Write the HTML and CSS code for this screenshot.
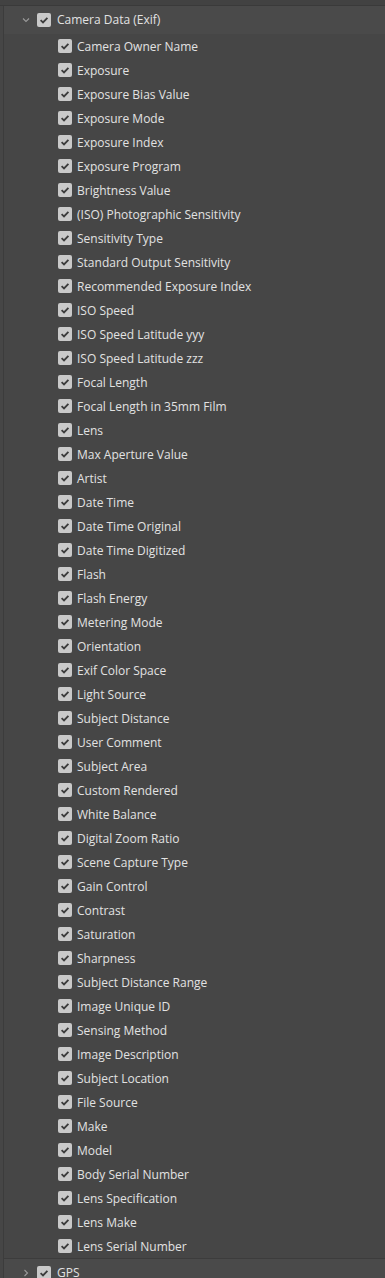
FILE: index.html
```html
<!DOCTYPE html>
<html>
<head>
<meta charset="utf-8">
<link rel="stylesheet" href="styles.css">
</head>
<body>
<div class="panel">
  <div class="topstrip"></div>
  <div class="tree">
    <div class="group-row">
      <svg class="chev" width="10" height="10" viewBox="0 0 10 10"><path d="M2 3.5 L5 6.5 L8 3.5" fill="none" stroke="#9a9a9a" stroke-width="1.1"/></svg>
      <span class="cb"><svg width="14" height="14" viewBox="0 0 14 14"><path d="M3.6 7.2 L6 9.4 L10.4 4.8" fill="none" stroke="#3b3b3b" stroke-width="1.8"/></svg></span>
      <span class="label">Camera Data (Exif)</span>
    </div>
    <div class="items">
      <div class="item"><span class="cb"><svg width="14" height="14" viewBox="0 0 14 14"><path d="M3.6 7.2 L6 9.4 L10.4 4.8" fill="none" stroke="#3b3b3b" stroke-width="1.8"/></svg></span><span class="label">Camera Owner Name</span></div>
      <div class="item"><span class="cb"><svg width="14" height="14" viewBox="0 0 14 14"><path d="M3.6 7.2 L6 9.4 L10.4 4.8" fill="none" stroke="#3b3b3b" stroke-width="1.8"/></svg></span><span class="label">Exposure</span></div>
      <div class="item"><span class="cb"><svg width="14" height="14" viewBox="0 0 14 14"><path d="M3.6 7.2 L6 9.4 L10.4 4.8" fill="none" stroke="#3b3b3b" stroke-width="1.8"/></svg></span><span class="label">Exposure Bias Value</span></div>
      <div class="item"><span class="cb"><svg width="14" height="14" viewBox="0 0 14 14"><path d="M3.6 7.2 L6 9.4 L10.4 4.8" fill="none" stroke="#3b3b3b" stroke-width="1.8"/></svg></span><span class="label">Exposure Mode</span></div>
      <div class="item"><span class="cb"><svg width="14" height="14" viewBox="0 0 14 14"><path d="M3.6 7.2 L6 9.4 L10.4 4.8" fill="none" stroke="#3b3b3b" stroke-width="1.8"/></svg></span><span class="label">Exposure Index</span></div>
      <div class="item"><span class="cb"><svg width="14" height="14" viewBox="0 0 14 14"><path d="M3.6 7.2 L6 9.4 L10.4 4.8" fill="none" stroke="#3b3b3b" stroke-width="1.8"/></svg></span><span class="label">Exposure Program</span></div>
      <div class="item"><span class="cb"><svg width="14" height="14" viewBox="0 0 14 14"><path d="M3.6 7.2 L6 9.4 L10.4 4.8" fill="none" stroke="#3b3b3b" stroke-width="1.8"/></svg></span><span class="label">Brightness Value</span></div>
      <div class="item"><span class="cb"><svg width="14" height="14" viewBox="0 0 14 14"><path d="M3.6 7.2 L6 9.4 L10.4 4.8" fill="none" stroke="#3b3b3b" stroke-width="1.8"/></svg></span><span class="label">(ISO) Photographic Sensitivity</span></div>
      <div class="item"><span class="cb"><svg width="14" height="14" viewBox="0 0 14 14"><path d="M3.6 7.2 L6 9.4 L10.4 4.8" fill="none" stroke="#3b3b3b" stroke-width="1.8"/></svg></span><span class="label">Sensitivity Type</span></div>
      <div class="item"><span class="cb"><svg width="14" height="14" viewBox="0 0 14 14"><path d="M3.6 7.2 L6 9.4 L10.4 4.8" fill="none" stroke="#3b3b3b" stroke-width="1.8"/></svg></span><span class="label">Standard Output Sensitivity</span></div>
      <div class="item"><span class="cb"><svg width="14" height="14" viewBox="0 0 14 14"><path d="M3.6 7.2 L6 9.4 L10.4 4.8" fill="none" stroke="#3b3b3b" stroke-width="1.8"/></svg></span><span class="label">Recommended Exposure Index</span></div>
      <div class="item"><span class="cb"><svg width="14" height="14" viewBox="0 0 14 14"><path d="M3.6 7.2 L6 9.4 L10.4 4.8" fill="none" stroke="#3b3b3b" stroke-width="1.8"/></svg></span><span class="label">ISO Speed</span></div>
      <div class="item"><span class="cb"><svg width="14" height="14" viewBox="0 0 14 14"><path d="M3.6 7.2 L6 9.4 L10.4 4.8" fill="none" stroke="#3b3b3b" stroke-width="1.8"/></svg></span><span class="label">ISO Speed Latitude yyy</span></div>
      <div class="item"><span class="cb"><svg width="14" height="14" viewBox="0 0 14 14"><path d="M3.6 7.2 L6 9.4 L10.4 4.8" fill="none" stroke="#3b3b3b" stroke-width="1.8"/></svg></span><span class="label">ISO Speed Latitude zzz</span></div>
      <div class="item"><span class="cb"><svg width="14" height="14" viewBox="0 0 14 14"><path d="M3.6 7.2 L6 9.4 L10.4 4.8" fill="none" stroke="#3b3b3b" stroke-width="1.8"/></svg></span><span class="label">Focal Length</span></div>
      <div class="item"><span class="cb"><svg width="14" height="14" viewBox="0 0 14 14"><path d="M3.6 7.2 L6 9.4 L10.4 4.8" fill="none" stroke="#3b3b3b" stroke-width="1.8"/></svg></span><span class="label">Focal Length in 35mm Film</span></div>
      <div class="item"><span class="cb"><svg width="14" height="14" viewBox="0 0 14 14"><path d="M3.6 7.2 L6 9.4 L10.4 4.8" fill="none" stroke="#3b3b3b" stroke-width="1.8"/></svg></span><span class="label">Lens</span></div>
      <div class="item"><span class="cb"><svg width="14" height="14" viewBox="0 0 14 14"><path d="M3.6 7.2 L6 9.4 L10.4 4.8" fill="none" stroke="#3b3b3b" stroke-width="1.8"/></svg></span><span class="label">Max Aperture Value</span></div>
      <div class="item"><span class="cb"><svg width="14" height="14" viewBox="0 0 14 14"><path d="M3.6 7.2 L6 9.4 L10.4 4.8" fill="none" stroke="#3b3b3b" stroke-width="1.8"/></svg></span><span class="label">Artist</span></div>
      <div class="item"><span class="cb"><svg width="14" height="14" viewBox="0 0 14 14"><path d="M3.6 7.2 L6 9.4 L10.4 4.8" fill="none" stroke="#3b3b3b" stroke-width="1.8"/></svg></span><span class="label">Date Time</span></div>
      <div class="item"><span class="cb"><svg width="14" height="14" viewBox="0 0 14 14"><path d="M3.6 7.2 L6 9.4 L10.4 4.8" fill="none" stroke="#3b3b3b" stroke-width="1.8"/></svg></span><span class="label">Date Time Original</span></div>
      <div class="item"><span class="cb"><svg width="14" height="14" viewBox="0 0 14 14"><path d="M3.6 7.2 L6 9.4 L10.4 4.8" fill="none" stroke="#3b3b3b" stroke-width="1.8"/></svg></span><span class="label">Date Time Digitized</span></div>
      <div class="item"><span class="cb"><svg width="14" height="14" viewBox="0 0 14 14"><path d="M3.6 7.2 L6 9.4 L10.4 4.8" fill="none" stroke="#3b3b3b" stroke-width="1.8"/></svg></span><span class="label">Flash</span></div>
      <div class="item"><span class="cb"><svg width="14" height="14" viewBox="0 0 14 14"><path d="M3.6 7.2 L6 9.4 L10.4 4.8" fill="none" stroke="#3b3b3b" stroke-width="1.8"/></svg></span><span class="label">Flash Energy</span></div>
      <div class="item"><span class="cb"><svg width="14" height="14" viewBox="0 0 14 14"><path d="M3.6 7.2 L6 9.4 L10.4 4.8" fill="none" stroke="#3b3b3b" stroke-width="1.8"/></svg></span><span class="label">Metering Mode</span></div>
      <div class="item"><span class="cb"><svg width="14" height="14" viewBox="0 0 14 14"><path d="M3.6 7.2 L6 9.4 L10.4 4.8" fill="none" stroke="#3b3b3b" stroke-width="1.8"/></svg></span><span class="label">Orientation</span></div>
      <div class="item"><span class="cb"><svg width="14" height="14" viewBox="0 0 14 14"><path d="M3.6 7.2 L6 9.4 L10.4 4.8" fill="none" stroke="#3b3b3b" stroke-width="1.8"/></svg></span><span class="label">Exif Color Space</span></div>
      <div class="item"><span class="cb"><svg width="14" height="14" viewBox="0 0 14 14"><path d="M3.6 7.2 L6 9.4 L10.4 4.8" fill="none" stroke="#3b3b3b" stroke-width="1.8"/></svg></span><span class="label">Light Source</span></div>
      <div class="item"><span class="cb"><svg width="14" height="14" viewBox="0 0 14 14"><path d="M3.6 7.2 L6 9.4 L10.4 4.8" fill="none" stroke="#3b3b3b" stroke-width="1.8"/></svg></span><span class="label">Subject Distance</span></div>
      <div class="item"><span class="cb"><svg width="14" height="14" viewBox="0 0 14 14"><path d="M3.6 7.2 L6 9.4 L10.4 4.8" fill="none" stroke="#3b3b3b" stroke-width="1.8"/></svg></span><span class="label">User Comment</span></div>
      <div class="item"><span class="cb"><svg width="14" height="14" viewBox="0 0 14 14"><path d="M3.6 7.2 L6 9.4 L10.4 4.8" fill="none" stroke="#3b3b3b" stroke-width="1.8"/></svg></span><span class="label">Subject Area</span></div>
      <div class="item"><span class="cb"><svg width="14" height="14" viewBox="0 0 14 14"><path d="M3.6 7.2 L6 9.4 L10.4 4.8" fill="none" stroke="#3b3b3b" stroke-width="1.8"/></svg></span><span class="label">Custom Rendered</span></div>
      <div class="item"><span class="cb"><svg width="14" height="14" viewBox="0 0 14 14"><path d="M3.6 7.2 L6 9.4 L10.4 4.8" fill="none" stroke="#3b3b3b" stroke-width="1.8"/></svg></span><span class="label">White Balance</span></div>
      <div class="item"><span class="cb"><svg width="14" height="14" viewBox="0 0 14 14"><path d="M3.6 7.2 L6 9.4 L10.4 4.8" fill="none" stroke="#3b3b3b" stroke-width="1.8"/></svg></span><span class="label">Digital Zoom Ratio</span></div>
      <div class="item"><span class="cb"><svg width="14" height="14" viewBox="0 0 14 14"><path d="M3.6 7.2 L6 9.4 L10.4 4.8" fill="none" stroke="#3b3b3b" stroke-width="1.8"/></svg></span><span class="label">Scene Capture Type</span></div>
      <div class="item"><span class="cb"><svg width="14" height="14" viewBox="0 0 14 14"><path d="M3.6 7.2 L6 9.4 L10.4 4.8" fill="none" stroke="#3b3b3b" stroke-width="1.8"/></svg></span><span class="label">Gain Control</span></div>
      <div class="item"><span class="cb"><svg width="14" height="14" viewBox="0 0 14 14"><path d="M3.6 7.2 L6 9.4 L10.4 4.8" fill="none" stroke="#3b3b3b" stroke-width="1.8"/></svg></span><span class="label">Contrast</span></div>
      <div class="item"><span class="cb"><svg width="14" height="14" viewBox="0 0 14 14"><path d="M3.6 7.2 L6 9.4 L10.4 4.8" fill="none" stroke="#3b3b3b" stroke-width="1.8"/></svg></span><span class="label">Saturation</span></div>
      <div class="item"><span class="cb"><svg width="14" height="14" viewBox="0 0 14 14"><path d="M3.6 7.2 L6 9.4 L10.4 4.8" fill="none" stroke="#3b3b3b" stroke-width="1.8"/></svg></span><span class="label">Sharpness</span></div>
      <div class="item"><span class="cb"><svg width="14" height="14" viewBox="0 0 14 14"><path d="M3.6 7.2 L6 9.4 L10.4 4.8" fill="none" stroke="#3b3b3b" stroke-width="1.8"/></svg></span><span class="label">Subject Distance Range</span></div>
      <div class="item"><span class="cb"><svg width="14" height="14" viewBox="0 0 14 14"><path d="M3.6 7.2 L6 9.4 L10.4 4.8" fill="none" stroke="#3b3b3b" stroke-width="1.8"/></svg></span><span class="label">Image Unique ID</span></div>
      <div class="item"><span class="cb"><svg width="14" height="14" viewBox="0 0 14 14"><path d="M3.6 7.2 L6 9.4 L10.4 4.8" fill="none" stroke="#3b3b3b" stroke-width="1.8"/></svg></span><span class="label">Sensing Method</span></div>
      <div class="item"><span class="cb"><svg width="14" height="14" viewBox="0 0 14 14"><path d="M3.6 7.2 L6 9.4 L10.4 4.8" fill="none" stroke="#3b3b3b" stroke-width="1.8"/></svg></span><span class="label">Image Description</span></div>
      <div class="item"><span class="cb"><svg width="14" height="14" viewBox="0 0 14 14"><path d="M3.6 7.2 L6 9.4 L10.4 4.8" fill="none" stroke="#3b3b3b" stroke-width="1.8"/></svg></span><span class="label">Subject Location</span></div>
      <div class="item"><span class="cb"><svg width="14" height="14" viewBox="0 0 14 14"><path d="M3.6 7.2 L6 9.4 L10.4 4.8" fill="none" stroke="#3b3b3b" stroke-width="1.8"/></svg></span><span class="label">File Source</span></div>
      <div class="item"><span class="cb"><svg width="14" height="14" viewBox="0 0 14 14"><path d="M3.6 7.2 L6 9.4 L10.4 4.8" fill="none" stroke="#3b3b3b" stroke-width="1.8"/></svg></span><span class="label">Make</span></div>
      <div class="item"><span class="cb"><svg width="14" height="14" viewBox="0 0 14 14"><path d="M3.6 7.2 L6 9.4 L10.4 4.8" fill="none" stroke="#3b3b3b" stroke-width="1.8"/></svg></span><span class="label">Model</span></div>
      <div class="item"><span class="cb"><svg width="14" height="14" viewBox="0 0 14 14"><path d="M3.6 7.2 L6 9.4 L10.4 4.8" fill="none" stroke="#3b3b3b" stroke-width="1.8"/></svg></span><span class="label">Body Serial Number</span></div>
      <div class="item"><span class="cb"><svg width="14" height="14" viewBox="0 0 14 14"><path d="M3.6 7.2 L6 9.4 L10.4 4.8" fill="none" stroke="#3b3b3b" stroke-width="1.8"/></svg></span><span class="label">Lens Specification</span></div>
      <div class="item"><span class="cb"><svg width="14" height="14" viewBox="0 0 14 14"><path d="M3.6 7.2 L6 9.4 L10.4 4.8" fill="none" stroke="#3b3b3b" stroke-width="1.8"/></svg></span><span class="label">Lens Make</span></div>
      <div class="item"><span class="cb"><svg width="14" height="14" viewBox="0 0 14 14"><path d="M3.6 7.2 L6 9.4 L10.4 4.8" fill="none" stroke="#3b3b3b" stroke-width="1.8"/></svg></span><span class="label">Lens Serial Number</span></div>
    </div>
    <div class="group-row last">
      <svg class="chev" width="10" height="10" viewBox="0 0 10 10"><path d="M3.5 2 L6.5 5 L3.5 8" fill="none" stroke="#9a9a9a" stroke-width="1.1"/></svg>
      <span class="cb"><svg width="14" height="14" viewBox="0 0 14 14"><path d="M3.6 7.2 L6 9.4 L10.4 4.8" fill="none" stroke="#3b3b3b" stroke-width="1.8"/></svg></span>
      <span class="label">GPS</span>
    </div>
  </div>
</div>
</body>
</html>
```
FILE: styles.css
```css
html, body {
  margin: 0;
  padding: 0;
  background: #464646;
  height: 1278px;
  overflow: hidden;
}
.panel {
  font-family: "Open Sans", "Noto Sans", sans-serif;
  font-size: 12px;
  color: #e2e2e2;
}
.topstrip {
  height: 5px;
  background: #424242;
  border-bottom: 1px solid #3a3a3a;
}
.tree {
  border-left: 1px solid #3c3c3c;
  margin-left: 3px;
}
.group-row {
  height: 28px;
  display: flex;
  align-items: center;
  background: #4a4a4a;
  padding-left: 17px;
}
.group-row.last {
  border-top: 1px solid #3c3c3c;
  height: 27px;
  align-items: flex-start;
  padding-top: 7px;
  box-sizing: border-box;
}
.chev {
  width: 10px;
  height: 10px;
  margin-right: 6px;
  flex: none;
}
.group-row.last .chev { margin-top: 2px; }
.cb {
  width: 14px;
  height: 14px;
  background: #c9c9c9;
  border-radius: 2px;
  display: inline-block;
  flex: none;
}
.cb svg { display: block; }
.group-row .label { margin-left: 6px; line-height: 14px; }
.item {
  height: 24px;
  display: flex;
  align-items: center;
  padding-left: 54px;
}
.item .label { margin-left: 5px; }
```
